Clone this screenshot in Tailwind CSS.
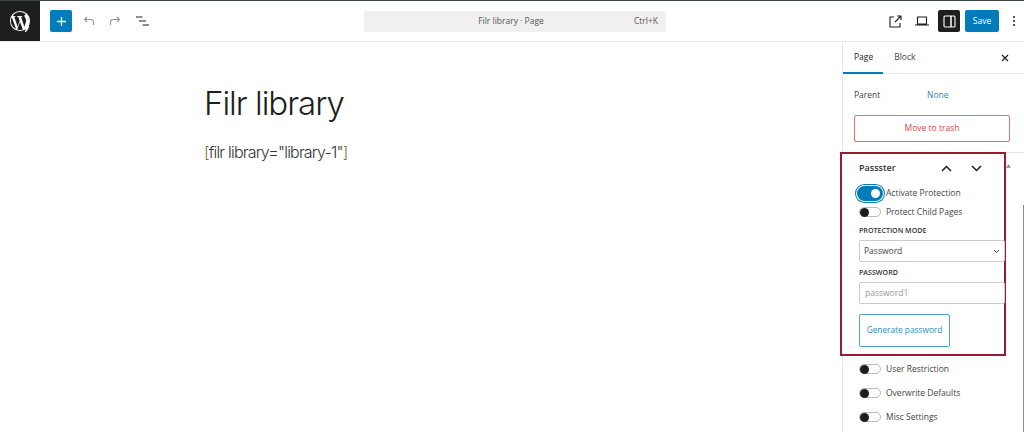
<!DOCTYPE html>
<html><head><meta charset="utf-8"><script src="https://cdn.jsdelivr.net/npm/@tailwindcss/browser@4"></script></head>
<body class="w-[1024px] h-[432px] overflow-hidden bg-white font-['Open_Sans',sans-serif] text-[#1e1e1e]">
<div class="flex flex-col h-[432px]">
  <header class="flex items-center h-[42px] shrink-0 border-t border-t-[#3c4341] border-b border-b-[#e6e6e6]">
    <div class="w-[40px] h-[40px] bg-[#1e1e1e] flex items-center justify-center shrink-0">
      <svg width="22" height="22" viewBox="0 0 24 24" fill="#fff"><path d="M12 1a11 11 0 1 0 0 22 11 11 0 0 0 0-22zm0 1.100c2.600 0 5 1 6.700 2.600h-.2c-1 0-1.700.9-1.700 1.800 0 .8.5 1.500 1 2.300.4.7.8 1.500.8 2.800 0 .9-.3 1.900-.8 3.300l-1 3.300-3.600-10.700c.6 0 1.100-.1 1.100-.1.500-.1.500-.9 0-.8 0 0-1.600.1-2.600.1-1 0-2.600-.1-2.600-.1-.5 0-.6.8 0 .8 0 0 .5.100 1 .1l1.500 4.200-2.200 6.500-3.600-10.700c.6 0 1.100-.1 1.100-.1.500-.1.500-.9 0-.8 0 0-1.600.1-2.600.1h-.6A9.900 9.900 0 0 1 12 2.100zM3 8l4.800 13.100A9.900 9.900 0 0 1 3 8zm9 5l3 8.200a9.900 9.900 0 0 1-6.100.2zm8.100-5.500a9.900 9.900 0 0 1-.2 8.800l-3 8.700c3.200-1.900 5.200-5.300 5.200-9 0-1.700-.4-3.300-1.200-4.700z"/></svg>
    </div>
    <div class="flex items-center flex-1 pl-[10px] relative">
      <button class="w-[22px] h-[22px] bg-[#007cba] rounded-[2px] flex items-center justify-center">
        <svg width="9" height="9" viewBox="0 0 9 9" stroke="#fff" stroke-width="1.300"><path d="M4.500 0v9M0 4.500h9"/></svg>
      </button>
      <svg class="ml-[11px]" width="12" height="10" viewBox="0 0 12 10" fill="none" stroke="#949494" stroke-width="1.100"><path d="M4 1 1.500 3.500 4 6M1.500 3.500h6.500a2.500 2.500 0 0 1 2.500 2.500v3"/></svg>
      <svg class="ml-[14px]" width="12" height="10" viewBox="0 0 12 10" fill="none" stroke="#949494" stroke-width="1.100"><path d="M8 1l2.500 2.500L8 6M10.500 3.500H4a2.500 2.500 0 0 0-2.500 2.500v3"/></svg>
      <svg class="ml-[15px]" width="13" height="10" viewBox="0 0 13 10" stroke="#1e1e1e" stroke-width="1.200"><path d="M0 1h6.500M3 5h7M6.500 9H13"/></svg>
      <div class="absolute left-[324px] w-[302px] h-[21px] bg-[#f0f0f0] rounded-[2px] flex items-center justify-center pr-[8px] text-[8.500px] text-[#555]">
        Filr library · Page
        <span class="absolute right-[8px] text-[#555]">Ctrl+K</span>
      </div>
    </div>
    <div class="flex items-center pr-[5px]">
      <svg width="13" height="13" viewBox="0 0 13 13" fill="none" stroke="#1e1e1e" stroke-width="1.100"><path d="M5 2H1v10h10V8M6 7l6-6M8 1h4v4"/></svg>
      <svg class="ml-[13px]" width="14" height="10" viewBox="0 0 14 10" fill="none" stroke="#1e1e1e" stroke-width="1.100"><path d="M2.500 1h9v7h-9zM0 9h14"/></svg>
      <div class="ml-[9px] w-[22px] h-[22px] bg-[#1e1e1e] rounded-[2px] flex items-center justify-center">
        <svg width="13" height="13" viewBox="0 0 13 13" fill="none" stroke="#fff" stroke-width="1.100"><rect x="1" y="1" width="11" height="11" rx="1"/><path d="M8 1v11" stroke-width="1.500"/></svg>
      </div>
      <button class="ml-[5px] w-[34px] h-[22px] bg-[#007cba] rounded-[2px] text-white text-[8.500px]">Save</button>
      <svg class="ml-[13px]" width="4" height="12" viewBox="0 0 4 12" fill="#1e1e1e"><circle cx="2" cy="2" r="1"/><circle cx="2" cy="6" r="1"/><circle cx="2" cy="10" r="1"/></svg>
      <div class="w-[3px]"></div>
    </div>
  </header>
  <div class="flex flex-1 min-h-0">
    <main class="flex-1 pl-[204px] font-['Inter',sans-serif]">
      <h1 class="mt-[41px] text-[33px] leading-[41px] font-light tracking-[-1px] text-[#1e1e1e]">Filr library</h1>
      <p class="mt-[17px] text-[16px] leading-[22px] font-light tracking-[-0.8px] text-[#333]"><span class="text-[#8a6d3b]">[</span>filr library="library-1"<span class="text-[#8a6d3b]">]</span></p>
    </main>
    <aside class="w-[182px] shrink-0 border-l border-[#e6e6e6] relative">
      <div class="flex items-center h-[32px] border-b border-[#e6e6e6] text-[8.500px] pl-[11px] pr-[15px] relative">
        <span class="text-[#1e1e1e]">Page</span>
        <span class="ml-[21px] text-[#444]">Block</span>
        <span class="absolute left-0 bottom-[-1px] w-[40px] h-[2px] bg-[#007cba]"></span>
        <svg class="ml-auto" width="8" height="8" viewBox="0 0 8 8" stroke="#1e1e1e" stroke-width="1.200"><path d="M1 1l6 6M7 1L1 7"/></svg>
      </div>
      <div class="flex items-center pl-[11px] mt-[14px] h-[14px] text-[8.500px] text-[#444]">
        <span class="w-[73px]">Parent</span><span class="text-[#2b8cc4]">None</span>
      </div>
      <div class="ml-[11px] mt-[13px] w-[156px] h-[27px] border border-[#cc1818]/60 rounded-[2px] flex items-center justify-center text-[8.500px] text-[#d04848]">Move to trash</div>
      <div class="mt-[10px] border-t border-[#e6e6e6] h-[1px]"></div>
      <section class="absolute left-[-3px] top-[110px] w-[166px] h-[204px] border-2 border-[#9b1b30] bg-white pl-[17px] z-10">
        <div class="flex items-center h-[14px] mt-[7px]">
          <span class="text-[9px] font-semibold text-[#333]">Passster</span>
          <svg class="ml-[45px]" width="11" height="7" viewBox="0 0 11 7" fill="none" stroke="#1e1e1e" stroke-width="1.500"><path d="M1 6l4.500-4.500L10 6"/></svg>
          <svg class="ml-[19px]" width="11" height="7" viewBox="0 0 11 7" fill="none" stroke="#1e1e1e" stroke-width="1.500"><path d="M1 1l4.500 4.500L10 1"/></svg>
        </div>
        <div class="flex items-center mt-[11px] h-[14px] text-[8.500px] text-[#444] gap-[3px] -ml-[2px]">
          <span class="w-[26px] h-[15px] rounded-full ring-1 ring-[#007cba] ring-offset-1 bg-[#007cba] flex items-center justify-end pr-[3px]"><span class="w-[9px] h-[9px] rounded-full bg-white"></span></span>
          <span>Activate Protection</span>
        </div>
        <div class="flex items-center mt-[5px] h-[14px] text-[8.500px] text-[#444] gap-[5px]">
          <span class="w-[22px] h-[10px] rounded-full border border-[#bbb] bg-white flex items-center"><span class="w-[9px] h-[9px] rounded-full bg-[#1e1e1e]"></span></span>
          <span>Protect Child Pages</span>
        </div>
        <div class="mt-[5px] h-[12px] text-[7.100px] leading-[12px] font-semibold text-[#333]">PROTECTION MODE</div>
        <div class="mt-[4px] w-[146px] h-[22px] border border-[#ccc] rounded-[2px] -mr-[1px] flex items-center justify-between pl-[4px] pr-[4px] text-[8.500px] text-[#444]">
          Password
          <svg width="7" height="5" viewBox="0 0 7 5" fill="none" stroke="#444" stroke-width="1"><path d="M1 1l2.500 2.500L6 1"/></svg>
        </div>
        <div class="mt-[4px] h-[12px] text-[7.100px] leading-[12px] font-semibold text-[#333]">PASSWORD</div>
        <div class="mt-[4px] w-[146px] h-[22px] border border-[#ccc] rounded-[2px] flex items-center pl-[5px] text-[8.500px] text-[#999]">password1</div>
        <div class="mt-[10px] w-[91px] h-[33px] border border-[#4ea4d0] rounded-[2px] flex items-center justify-center text-[8.300px] text-[#2b8cc4]">Generate password</div>
      </section>
      <div class="absolute left-[16px] top-[320px] flex flex-col gap-[10px] text-[8.500px] text-[#444]">
        <div class="flex items-center h-[14px] gap-[5px]"><span class="w-[22px] h-[10px] rounded-full border border-[#bbb] flex items-center"><span class="w-[9px] h-[9px] rounded-full bg-[#1e1e1e]"></span></span>User Restriction</div>
        <div class="flex items-center h-[14px] gap-[5px]"><span class="w-[22px] h-[10px] rounded-full border border-[#bbb] flex items-center"><span class="w-[9px] h-[9px] rounded-full bg-[#1e1e1e]"></span></span>Overwrite Defaults</div>
        <div class="flex items-center h-[14px] gap-[5px]"><span class="w-[22px] h-[10px] rounded-full border border-[#bbb] flex items-center"><span class="w-[9px] h-[9px] rounded-full bg-[#1e1e1e]"></span></span>Misc Settings</div>
      </div>
      <svg class="absolute left-[163px] top-[122px] z-20" width="5" height="4" viewBox="0 0 6 4" fill="#888"><path d="M0 4l3-4 3 4z"/></svg>
      <div class="absolute right-0 top-[163px] w-[1px] h-[230px] bg-[#8c8c8c]"></div>
    </aside>
  </div>
</div>
</body></html>
